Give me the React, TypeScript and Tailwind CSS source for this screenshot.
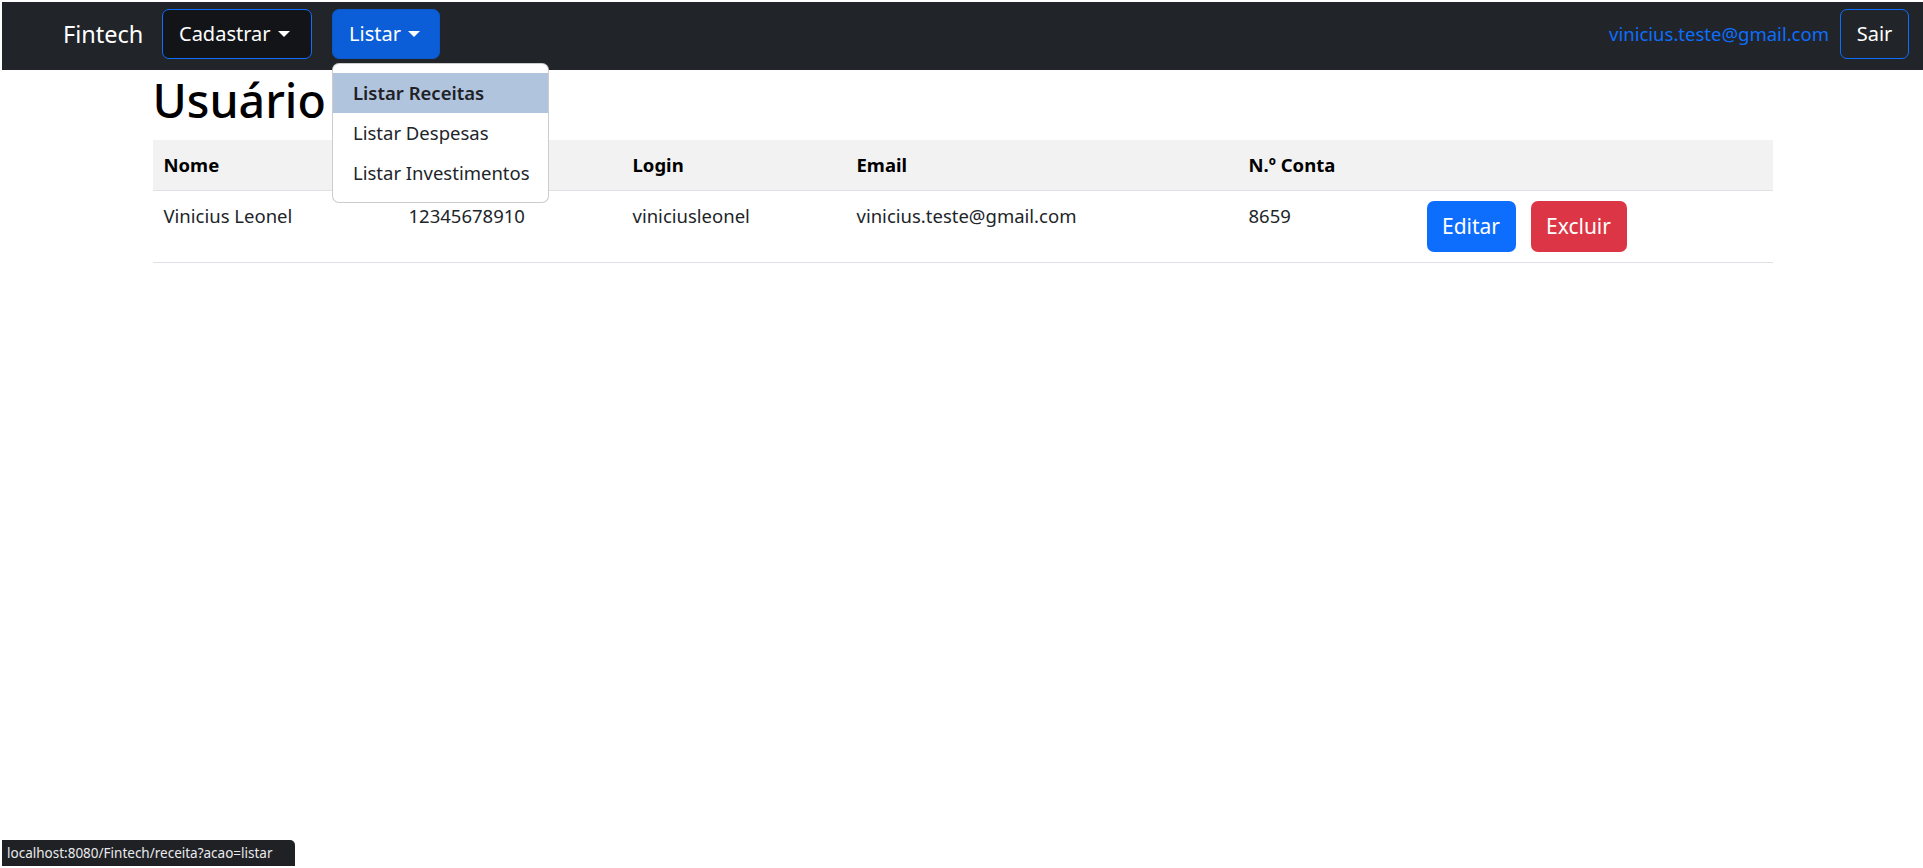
import React from 'react';

const font = { fontFamily: '"Noto Sans", "Open Sans", sans-serif' };

// caret like bootstrap's dropdown-toggle::after
function Caret() {
  return (
    <span className="inline-block w-0 h-0 ml-[7px] align-[4px] border-t-[6px] border-t-white border-x-[6px] border-x-transparent" />
  );
}

const columns = [
  { label: 'Nome', w: 'w-[245px]' },
  { label: 'CPF', w: 'w-[224px]' },
  { label: 'Login', w: 'w-[224px]' },
  { label: 'Email', w: 'w-[392px]' },
  { label: 'N.º Conta', w: 'w-[179px]' },
  { label: '', w: '' },
];

const usuarios = [
  {
    nome: 'Vinicius Leonel',
    cpf: '12345678910',
    login: 'viniciusleonel',
    email: 'vinicius.teste@gmail.com',
    conta: '8659',
  },
];

export default function App() {
  return (
    <div className="relative min-h-screen bg-white pt-[2px] pl-[2px] text-[#212529]" style={font}>
      {/* Navbar */}
      <nav className="h-[68px] bg-[#212529] flex items-start pt-[7px] pl-[61px] pr-[14px]">
        <a className="h-[50px] w-[79px] flex items-center text-[23.5px] text-white mr-[20px] pt-[2px] whitespace-nowrap">Fintech</a>

        <button className="h-[50px] w-[150px] flex items-center pl-[16px] rounded-[7px] border border-[#0d6efd] bg-[#121417] text-white text-[20px]">
          Cadastrar
          <Caret />
        </button>

        <div className="relative ml-[20px]">
          <button className="h-[50px] w-[108px] flex items-center pl-[16px] rounded-[7px] border border-[#0a58ca] bg-[#0b5ed7] text-white text-[20px]">
            Listar
            <Caret />
          </button>
          <ul className="absolute left-0 top-[54px] z-10 w-[217px] py-[9px] bg-white border border-black/20 rounded-[7px] text-[18.5px] whitespace-nowrap">
            <li className="h-[40px] flex items-center px-[20px] bg-[#b0c4de] font-semibold text-[#1e2125]">Listar Receitas</li>
            <li className="h-[40px] flex items-center px-[20px] text-[#212529]">Listar Despesas</li>
            <li className="h-[40px] flex items-center px-[20px] text-[#212529]">Listar Investimentos</li>
          </ul>
        </div>

        <div className="ml-auto flex items-center h-[50px]">
          <span className="text-[18.5px] text-[#0d6efd]">vinicius.teste@gmail.com</span>
          <button className="ml-[11px] h-[50px] w-[69px] rounded-[7px] border border-[#0d6efd] text-white text-[20px]">
            Sair
          </button>
        </div>
      </nav>

      {/* Content */}
      <main className="w-[1620px] mx-auto">
        <h1 className="h-[60px] leading-[60px] text-[46.5px] font-medium text-black mb-[10px]">Usuário</h1>

        <table className="w-full border-collapse text-[18.5px]">
          <thead>
            <tr className="bg-[#f2f2f2] border-b border-[#dee2e6]">
              {columns.map((c, i) => (
                <th key={i} className={`${c.w} h-[50px] px-[11px] py-[10px] text-left font-bold text-black text-[18.5px] leading-[30px]`}>
                  {c.label}
                </th>
              ))}
            </tr>
          </thead>
          <tbody>
            {usuarios.map((u) => (
              <tr key={u.login} className="border-b border-[#dee2e6]">
                <td className="px-[11px] py-[10px] align-top leading-[30px]">{u.nome}</td>
                <td className="px-[11px] py-[10px] align-top leading-[30px]">{u.cpf}</td>
                <td className="px-[11px] py-[10px] align-top leading-[30px]">{u.login}</td>
                <td className="px-[11px] py-[10px] align-top leading-[30px]">{u.email}</td>
                <td className="px-[11px] py-[10px] align-top leading-[30px]">{u.conta}</td>
                <td className="px-[10px] py-[10px] align-top">
                  <div className="flex gap-[15px]">
                    <button className="h-[51px] w-[89px] rounded-[7px] bg-[#0d6efd] text-white text-[21px]">Editar</button>
                    <button className="h-[51px] w-[96px] rounded-[7px] bg-[#dc3545] text-white text-[21px]">Excluir</button>
                  </div>
                </td>
              </tr>
            ))}
          </tbody>
        </table>
      </main>

      {/* browser status bubble */}
      <div className="absolute left-[2px] bottom-[2px] h-[26px] w-[293px] bg-[#202124] rounded-tr-[5px] flex items-center px-[5px] text-[13.5px] text-[#e8eaed] whitespace-nowrap overflow-hidden">
        localhost:8080/Fintech/receita?acao=listar
      </div>
    </div>
  );
}
